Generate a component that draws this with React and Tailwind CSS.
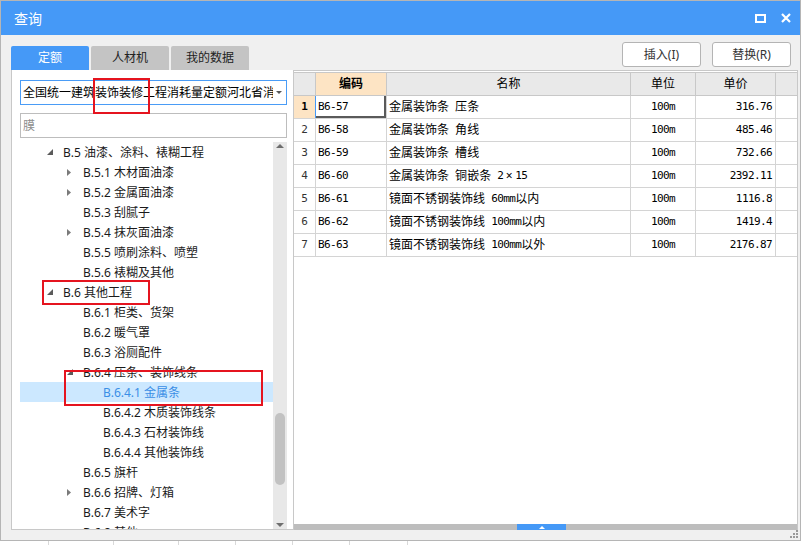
import React from "react";

const treeRows = [
  { l: 1, t: "exp", text: "B.5 油漆、涂料、裱糊工程" },
  { l: 2, t: "col", text: "B.5.1 木材面油漆" },
  { l: 2, t: "col", text: "B.5.2 金属面油漆" },
  { l: 2, text: "B.5.3 刮腻子" },
  { l: 2, t: "col", text: "B.5.4 抹灰面油漆" },
  { l: 2, text: "B.5.5 喷刷涂料、喷塑" },
  { l: 2, text: "B.5.6 裱糊及其他" },
  { l: 1, t: "exp", text: "B.6 其他工程" },
  { l: 2, text: "B.6.1 柜类、货架" },
  { l: 2, text: "B.6.2 暖气罩" },
  { l: 2, text: "B.6.3 浴厕配件" },
  { l: 2, t: "exp", text: "B.6.4 压条、装饰线条" },
  { l: 3, text: "B.6.4.1 金属条", sel: true },
  { l: 3, text: "B.6.4.2 木质装饰线条" },
  { l: 3, text: "B.6.4.3 石材装饰线" },
  { l: 3, text: "B.6.4.4 其他装饰线" },
  { l: 2, text: "B.6.5 旗杆" },
  { l: 2, t: "col", text: "B.6.6 招牌、灯箱" },
  { l: 2, text: "B.6.7 美术字" },
  { l: 2, text: "B.6.8 其他" },
];

const levelPad = { 1: "pl-[27px]", 2: "pl-[47px]", 3: "pl-[67px]" };

const tableRows = [
  ["1", "B6-57", "金属装饰条 压条", "100m", "316.76"],
  ["2", "B6-58", "金属装饰条 角线", "100m", "485.46"],
  ["3", "B6-59", "金属装饰条 槽线", "100m", "732.66"],
  ["4", "B6-60", "金属装饰条 铜嵌条 2×15", "100m", "2392.11"],
  ["5", "B6-61", "镜面不锈钢装饰线 60mm以内", "100m", "1116.8"],
  ["6", "B6-62", "镜面不锈钢装饰线 100mm以内", "100m", "1419.4"],
  ["7", "B6-63", "镜面不锈钢装饰线 100mm以外", "100m", "2176.87"],
];

function Mx({ s }) {
  const parts = s.split(/([\x20-\x7e]+)/).filter((p) => p.length > 0);
  return (
    <>
      {parts.map((p, i) =>
        /^[\x20-\x7e]+$/.test(p) ? (
          <span
            key={i}
            className="font-['DejaVu_Sans_Mono'] text-[11px] tracking-[-0.6px] whitespace-pre"
          >
            {p}
          </span>
        ) : (
          <span key={i}>
            {p.split("").map((c, j) =>
              c === "×" ? (
                <span key={j} className="inline-block w-[12px] text-center">
                  ×
                </span>
              ) : (
                c
              )
            )}
          </span>
        )
      )}
    </>
  );
}

function ExpTri() {
  return (
    <svg width="6" height="6" viewBox="0 0 6 6">
      <polygon points="6,0 6,6 0,6" fill="#5b5b5b" />
    </svg>
  );
}
function ColTri() {
  return (
    <svg width="4" height="7" viewBox="0 0 4 7">
      <polygon points="0,0 4,3.5 0,7" fill="#7a7a7a" />
    </svg>
  );
}

export default function App() {
  return (
    <div className="w-[805px] h-[545px] bg-white relative overflow-hidden font-['Noto_Sans','Noto_Sans_CJK_SC',sans-serif] text-[12px] text-[#1a1a1a]">
      <div className="w-[801px] h-[541px] border border-[#b5b5b5] bg-[#f0f0f0] flex flex-col">
        {/* title bar */}
        <div className="h-[34px] shrink-0 bg-[#4599f7] flex items-center pl-[13px] pr-[9px] text-white text-[14px]">
          <span className="pt-[1px]">查询</span>
          <div className="ml-auto flex items-center gap-[15px]">
            <svg width="11" height="9" viewBox="0 0 11 9">
              <rect x="1" y="1" width="9" height="7" fill="none" stroke="white" strokeWidth="2" />
            </svg>
            <svg width="10" height="10" viewBox="0 0 10 10">
              <path d="M1 1L9 9M9 1L1 9" stroke="white" strokeWidth="2.2" />
            </svg>
          </div>
        </div>

        {/* tabs + buttons */}
        <div className="h-[35px] shrink-0 flex">
          <div className="flex items-end gap-[2px] pl-[10px]">
            <div className="w-[78px] h-[24px] bg-[#4599f7] text-white flex items-center justify-center rounded-t-[2px]">
              定额
            </div>
            <div className="w-[78px] h-[24px] bg-[#c4c4c4] text-[#222] flex items-center justify-center rounded-t-[2px]">
              人材机
            </div>
            <div className="w-[78px] h-[24px] bg-[#c4c4c4] text-[#222] flex items-center justify-center rounded-t-[2px]">
              我的数据
            </div>
          </div>
          <div className="ml-auto flex gap-[11px] pt-[7px] pr-[9px]">
            <button className="w-[79px] h-[25px] bg-white border border-[#b4b4b4] rounded-[3px] text-[12px] text-[#333] flex items-center justify-center">
              插入(I)
            </button>
            <button className="w-[79px] h-[25px] bg-white border border-[#b4b4b4] rounded-[3px] text-[12px] text-[#333] flex items-center justify-center">
              替换(R)
            </button>
          </div>
        </div>

        {/* panels */}
        <div className="h-[460px] shrink-0 flex pl-[10px]">
          {/* left panel */}
          <div className="w-[282px] border-l border-b border-[#c8c8c8] bg-white flex flex-col pt-[10px] pl-[8px]">
            <div className="w-[267px] h-[25px] shrink-0 border border-[#4a9cf6] bg-white flex items-center pl-[2px]">
              <span className="w-[250px] overflow-hidden whitespace-nowrap text-black">
                全国统一建筑装饰装修工程消耗量定额河北省消耗量定额
              </span>
              <svg className="ml-[3px]" width="6" height="3" viewBox="0 0 6 3">
                <polygon points="0,0 6,0 3,3" fill="#555" />
              </svg>
            </div>
            <div className="w-[267px] h-[25px] shrink-0 mt-[8px] border border-[#bdbdbd] bg-white flex items-center pl-[2px] text-[#8c8c8c]">
              膜
            </div>
            <div className="flex-1 mt-[4px] flex min-h-0">
              <div className="w-[253px] overflow-hidden">
                {treeRows.map((r, i) => (
                  <div
                    key={i}
                    className={`h-[20px] flex items-center whitespace-nowrap ${levelPad[r.l]} ${
                      r.sel ? "bg-[#cce8ff] text-[#3a8ee6]" : ""
                    }`}
                  >
                    <span className="w-[16px] flex items-center">
                      {r.t === "exp" ? <ExpTri /> : r.t === "col" ? <ColTri /> : null}
                    </span>
                    <span className="pt-[1px]">{r.text}</span>
                  </div>
                ))}
              </div>
              <div className="w-[14px] bg-[#e8e8e8] flex flex-col items-center">
                <svg className="mt-[2px]" width="8" height="4" viewBox="0 0 8 4">
                  <polygon points="0,4 8,4 4,0" fill="#6e6e6e" />
                </svg>
                <div className="mt-[265px] w-[10px] h-[72px] rounded-full bg-[#c2c2c2]" />
                <div className="flex-1" />
                <svg className="mb-[2px]" width="8" height="4" viewBox="0 0 8 4">
                  <polygon points="0,0 8,0 4,4" fill="#6e6e6e" />
                </svg>
              </div>
            </div>
          </div>

          {/* right panel */}
          <div className="w-[505px] border-l border-t border-r border-[#c8c8c8] bg-white flex flex-col pt-[1px]">
            <div className="flex h-[24px] border-t border-b border-[#c8c8c8] bg-[#e9e9e9] text-black">
              <div className="w-[22px] border-r border-[#c8c8c8]" />
              <div className="w-[71px] border-r border-[#c8c8c8] bg-[#fde4c4] flex items-center justify-center font-bold">
                编码
              </div>
              <div className="w-[244px] border-r border-[#c8c8c8] flex items-center justify-center">名称</div>
              <div className="w-[65px] border-r border-[#c8c8c8] flex items-center justify-center">单位</div>
              <div className="w-[80px] border-r border-[#c8c8c8] flex items-center justify-center">单价</div>
            </div>
            {tableRows.map((r, i) => (
              <div key={i} className="flex h-[23px] border-b border-[#d4d4d4] text-black">
                <div
                  className={`w-[22px] border-r flex items-center justify-center font-['DejaVu_Sans_Mono'] text-[11px] ${
                    i === 0 ? "bg-[#fde4c4] font-bold border-[#4599f7]" : "border-[#d4d4d4] text-[#333]"
                  }`}
                >
                  {r[0]}
                </div>
                <div
                  className={`w-[71px] border-r border-[#d4d4d4] flex items-center pl-[2px] ${
                    i === 0 ? "shadow-[inset_-2px_-2px_0_#5a5a5a]" : ""
                  }`}
                >
                  <Mx s={r[1]} />
                </div>
                <div className="w-[244px] border-r border-[#d4d4d4] flex items-center pl-[2px] whitespace-nowrap">
                  <Mx s={r[2]} />
                </div>
                <div className="w-[65px] border-r border-[#d4d4d4] flex items-center justify-center">
                  <Mx s={r[3]} />
                </div>
                <div className="w-[80px] border-r border-[#d4d4d4] flex items-center justify-end pr-[3px]">
                  <Mx s={r[4]} />
                </div>
              </div>
            ))}
            <div className="flex-1" />
            <div className="h-[6px] bg-[#bdbdbd] flex">
              <div className="ml-[223px] w-[49px] h-[6px] bg-[#4599f7] flex items-center justify-center">
                <svg width="6" height="3" viewBox="0 0 6 3">
                  <polygon points="0,3 6,3 3,0" fill="white" />
                </svg>
              </div>
            </div>
          </div>
        </div>

        {/* bottom strip */}
        <div className="h-[10px] shrink-0 flex justify-end pr-[2px]">
          <svg width="8" height="8" viewBox="0 0 8 8">
            <rect x="6" y="0" width="2" height="2" fill="#9a9a9a" />
            <rect x="3" y="3" width="2" height="2" fill="#9a9a9a" />
            <rect x="6" y="3" width="2" height="2" fill="#9a9a9a" />
            <rect x="0" y="6" width="2" height="2" fill="#9a9a9a" />
            <rect x="3" y="6" width="2" height="2" fill="#9a9a9a" />
            <rect x="6" y="6" width="2" height="2" fill="#9a9a9a" />
          </svg>
        </div>
      </div>

      {/* background behind dialog */}
      <div className="flex h-[4px]">
        <div className="w-[48px]" />
        <div className="w-[65px] border-l border-[#d9d9d9]" />
        <div className="w-[65px] border-l border-[#d9d9d9]" />
        <div className="w-[57px] border-l border-[#d9d9d9]" />
        <div className="w-[57px] border-l border-[#d9d9d9]" />
        <div className="w-[57px] border-l border-[#d9d9d9]" />
        <div className="w-[58px] border-l border-[#d9d9d9]" />
        <div className="flex-1 border-l border-[#d9d9d9]" />
      </div>

      {/* red annotation boxes */}
      <div className="absolute left-[93px] top-[78px] w-[57px] h-[36px] border-2 border-[#e5141f]" />
      <div className="absolute left-[42px] top-[280px] w-[108px] h-[25px] border-2 border-[#e5141f]" />
      <div className="absolute left-[64px] top-[370px] w-[199px] h-[36px] border-2 border-[#e5141f]" />
    </div>
  );
}
